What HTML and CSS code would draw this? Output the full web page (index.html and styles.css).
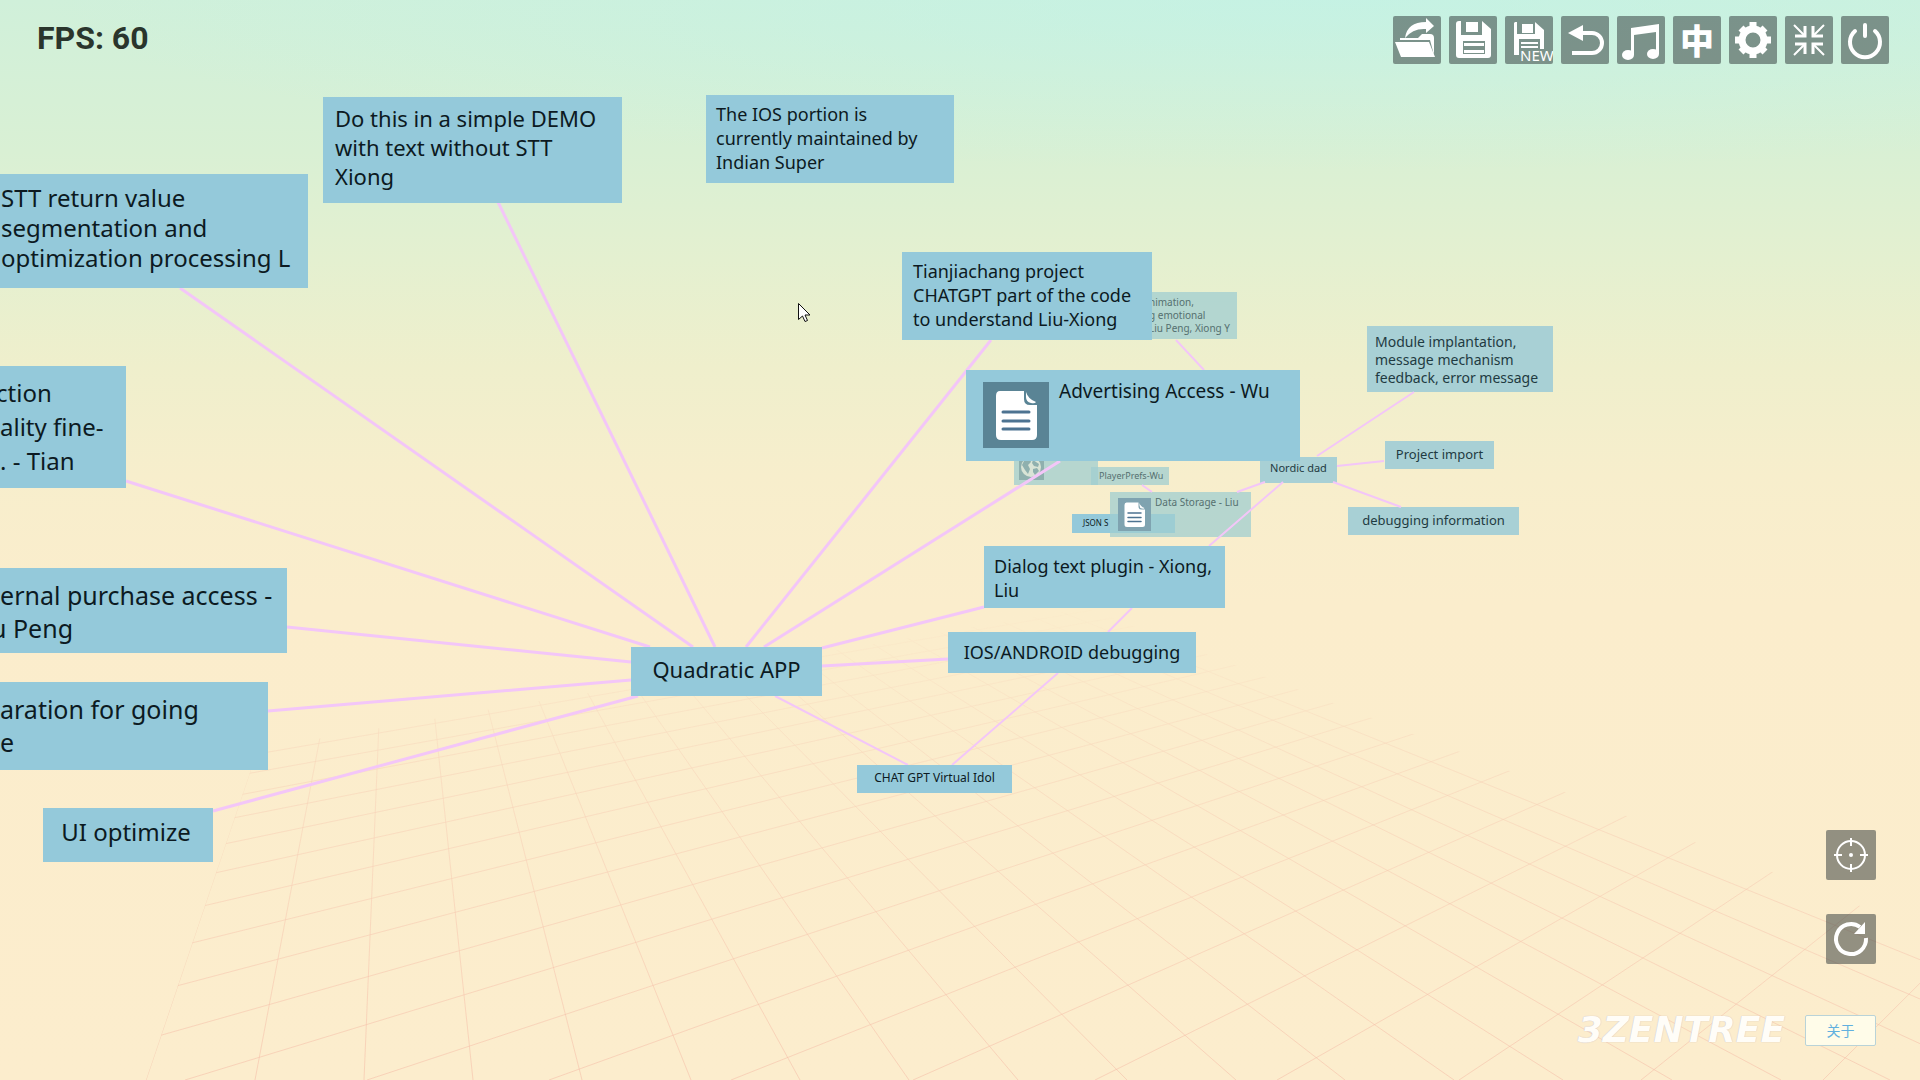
FILE: index.html
```html
<!DOCTYPE html>
<html lang="en">
<head>
<meta charset="utf-8">
<title>3ZENTREE</title>
<link rel="stylesheet" href="styles.css">
</head>
<body>
<svg class="defs" width="0" height="0" aria-hidden="true">
  <symbol id="doc" viewBox="0 0 66 66">
    <path fill="#fff" d="M17 9h24v8q0 6 6 6h7v30q0 5-5 5H18q-5 0-5-5V14q0-5 4-5z"/>
    <path fill="#fff" d="M43 10q2 7 10 10q-1 2-5 1q-5-1-5-6z"/>
    <path stroke="#4d7391" stroke-width="3" stroke-linecap="round" d="M20 30h26M20 39h26M20 47h26"/>
  </symbol>
</svg>

<main class="stage">
  <svg class="layer floor" aria-hidden="true">
    <defs>
      <linearGradient id="fade" x1="0" y1="0" x2="0" y2="1">
        <stop offset="0" stop-color="#fff" stop-opacity="0"/>
        <stop offset=".35" stop-color="#fff" stop-opacity=".5"/>
        <stop offset="1" stop-color="#fff"/>
      </linearGradient>
      <mask id="floor-fade" maskUnits="userSpaceOnUse" x="0" y="600" width="1920" height="480">
        <rect x="0" y="600" width="1920" height="480" fill="url(#fade)"/>
      </mask>
      <clipPath id="floor-edge"><path d="M258 749L1086 608L1920 929V1080H146z"/></clipPath>
    </defs>
    <g mask="url(#floor-fade)"><g clip-path="url(#floor-edge)"><path id="floor-grid" class="grid"/></g></g>
  </svg>

  <article class="node far s10 n-emotion">nimation,<br>g emotional<br>Liu Peng, Xiong Y</article>
  <article class="node far n-globe">
    <svg class="pic" viewBox="0 0 25 25" role="img" aria-label="Web page"><rect width="25" height="25" fill="#8fb0ae"/><circle cx="12" cy="12" r="10" fill="#d9e4d6"/><path fill="#8fb0ae" d="M5 6l6-2 1 3-3 3 2 4-2 5-3-4-3-5zM14 5l6 4-1 3-4-1-2-3zM14 14l4-1 2 3-4 4-2-3z"/></svg>
  </article>
  <article class="node s12 n-json">JSON S</article>
  <article class="node far s9 n-prefs">PlayerPrefs-Wu</article>
  <article class="node far s10 n-data"><svg class="pic" role="img" aria-label="Document"><use href="#doc"/></svg><span>Data Storage - Liu</span></article>
  <article class="node mid s11 n-nordic">Nordic dad</article>
  <article class="node mid s14 n-module">Module implantation,<br>message mechanism<br>feedback, error message</article>
  <article class="node mid s13 n-import">Project import</article>
  <article class="node mid s13 n-info">debugging information</article>

  <svg class="layer links" aria-hidden="true">
    <path class="near" d="M498 202L715 647M180 288L693 647M126 481L650 647M287 627L631 662M268 711L631 680M213 811L638 696M991 340L746 647M1060 461L764 647M984 607L822 648M948 659L822 666"/>
    <path class="thin" d="M775 696L908 765M952 765L1058 673M1108 632L1132 608M1209 546L1283 482M1317 456L1414 392M1337 466L1384 461M1333 482L1401 507M1265 482L1237 492M1176 340L1204 370M1142 485L1152 492"/>
  </svg>

  <article class="node s22 n-demo">Do this in a simple DEMO<br>with text without STT<br>Xiong</article>
  <article class="node s24 n-stt">STT return value<br>segmentation and<br>optimization processing L</article>
  <article class="node s24 n-function">ction<br>ality fine-<br>. - Tian</article>
  <article class="node s25 n-purchase">ternal purchase access -<br>u Peng</article>
  <article class="node s25 n-online">aration for going<br>e</article>
  <article class="node s24 n-ui">UI optimize</article>
  <article class="node s18 n-ios">The IOS portion is<br>currently maintained by<br>Indian Super</article>
  <article class="node s18 n-tian">Tianjiachang project<br>CHATGPT part of the code<br>to understand Liu-Xiong</article>
  <article class="node s19 n-ads"><svg class="pic" role="img" aria-label="Document"><use href="#doc"/></svg><span>Advertising Access - Wu</span></article>
  <article class="node s18 n-dialog">Dialog text plugin - Xiong,<br>Liu</article>
  <article class="node s18 n-debug">IOS/ANDROID debugging</article>
  <article class="node s22 n-quad">Quadratic APP</article>
  <article class="node s12 n-chat">CHAT GPT Virtual Idol</article>

  <svg class="cursor" viewBox="0 0 13 20" aria-hidden="true"><path fill="#fff" stroke="#111" d="M.5.5v16l4-3.500 2.500 5.500 2.500-1-2.500-5.500h5z"/></svg>
</main>

<header class="top">
  <p class="fps">FPS: 60</p>
  <nav class="tools">
    <button type="button" aria-label="Open"><svg viewBox="0 0 48 48"><path d="M2 26h34l6 15H8z"/><path d="M7 24v-2h18l4-4h8q4 0 4 4v17l-4-15z"/><path d="M12 22Q14 6 33 6V2l8 8-8 7v-4Q20 12 12 22z"/></svg></button>
    <button type="button" aria-label="Save"><svg viewBox="0 0 48 48"><path fill-rule="evenodd" d="M10 5h2v14h21V5l9 8v26q0 3-3 3H10q-3 0-3-3V8q0-3 3-3zM14 25v13h22V25z"/><path d="M17 6h12v10H17zM15 27h20v3H15zM15 34h20v3H15z"/></svg></button>
    <button type="button" aria-label="Save as new"><svg viewBox="0 0 48 48"><path d="M10 6h2v12h18V6l9 8v19h-4V23H14v16H9V7z"/><path d="M17 8h11v9H17zM16 26h17v2H16zM16 30h17v2H16z"/><text x="15" y="45" font-size="15">NEW</text></svg></button>
    <button type="button" aria-label="Undo"><svg viewBox="0 0 48 48"><path d="M7 17L22 9v16z"/><path class="line" stroke-width="4" d="M20 17h11a10 10 0 0 1 0 20H11"/></svg></button>
    <button type="button" aria-label="Music"><svg viewBox="0 0 48 48"><path d="M14 12l28-4v30h-3V16l-22 3v20h-3z"/><ellipse cx="11" cy="39" rx="6" ry="5"/><ellipse cx="36" cy="38" rx="6" ry="5"/></svg></button>
    <button type="button" aria-label="Language" class="lang">中</button>
    <button type="button" aria-label="Settings"><svg viewBox="0 0 48 48"><circle class="line" cx="24" cy="24" r="11" stroke-width="7"/><path class="line" stroke-width="7" d="M24 6v5M24 37v5M6 24h5M37 24h5M12 12l3 3M33 33l3 3M36 12l-3 3M15 33l-3 3"/></svg></button>
    <button type="button" aria-label="Exit full screen"><svg viewBox="0 0 48 48"><path class="line" stroke-width="2" d="M9 9l10 10M39 9L29 19M9 39l10-10M39 39L29 29"/><path class="line" stroke-width="3" d="M20 10v10H10M28 10v10h10M20 38V28H10M28 38V28h10"/></svg></button>
    <button type="button" aria-label="Quit"><svg viewBox="0 0 48 48"><path class="line" stroke-width="4" stroke-linecap="round" d="M24 9v11"/><path class="line" stroke-width="4" stroke-linecap="round" d="M14 15a15 15 0 1 0 20 0"/></svg></button>
  </nav>
</header>

<footer class="bottom">
  <div class="side">
    <button type="button" aria-label="Centre view"><svg viewBox="0 0 50 50"><circle class="line" cx="25" cy="25" r="14" stroke-width="2"/><path class="line" stroke-width="2" d="M25 8v8M25 34v8M8 25h8M34 25h8"/><circle cx="25" cy="25" r="2"/></svg></button>
    <button type="button" aria-label="Reset view"><svg viewBox="0 0 50 50"><path class="line" stroke-width="4" d="M40 24A15 15 0 1 1 34 13"/><path d="M39 8v12H28z"/></svg></button>
  </div>
  <div class="brand">
    <strong class="logo">3ZENTREE</strong>
    <button type="button" class="about" lang="zh">关于</button>
  </div>
</footer>
<script src="grid.js"></script>
</body>
</html>
```
FILE: styles.css
```css
* { box-sizing: border-box; }

body {
  margin: 0;
  min-height: 100vh;
  position: relative;
  display: flex;
  flex-direction: column;
  justify-content: space-between;
  overflow: hidden;
  font-family: "Noto Sans", "Noto Sans CJK SC", sans-serif;
  color: #0c1a22;
  background:
    radial-gradient(ellipse 1300px 170px at 70% 0, rgba(190, 243, 234, .6), rgba(190, 243, 234, 0)),
    linear-gradient(#d0f0da 0, #d9f0d4 14%, #e4f0d0 24%, #efefcc 34%, #f7eecc 44%, #fbedcc 56%, #fcedcd 100%);
}

.defs { position: absolute; }

/* Mind map canvas */
.stage { position: absolute; inset: 0; overflow: hidden; }
.layer { position: absolute; inset: 0; width: 100%; height: 100%; }
.layer path { fill: none; }
.links path { stroke: #f3c6f8; }
.links .near { stroke-width: 3; }
.links .thin { stroke-width: 2; }
.layer .grid { stroke: #f5b8a4; stroke-width: 1; opacity: .5; }

.node {
  position: absolute;
  background: #94c9da;
  white-space: nowrap;
}
.node.mid { background: #a8d0d5; color: #1f3b42; }
.node.far { background: rgba(160, 205, 208, .75); color: #55706f; }

.s9 { font-size: 9px; line-height: 12px; }
.s10 { font-size: 10px; line-height: 13px; }
.s11 { font-size: 11px; line-height: 16px; }
.s12 { font-size: 12px; line-height: 18px; }
.s13 { font-size: 13px; line-height: 18px; }
.s14 { font-size: 14px; line-height: 18px; }
.s18 { font-size: 18px; line-height: 24px; }
.s19 { font-size: 19px; line-height: 24px; }
.s22 { font-size: 22px; line-height: 29px; }
.s24 { font-size: 24px; line-height: 34px; }
.s25 { font-size: 25px; line-height: 33px; }

.n-demo { left: 323px; top: 97px; width: 299px; padding: 7px 12px 12px; }
.n-stt { left: 0; top: 174px; width: 308px; padding: 9px 1px 15px; line-height: 30px; }
.n-function { left: 0; top: 366px; width: 126px; padding: 10px 0; text-indent: -4px; }
.n-purchase { left: -9px; top: 568px; width: 296px; padding: 11px 0 8px; }
.n-online { left: 0; top: 682px; width: 268px; padding: 11px 0; }
.n-ui { left: 43px; top: 808px; width: 170px; padding: 7px 4px 13px 0; text-align: center; }
.n-ios { left: 706px; top: 95px; width: 248px; padding: 7px 10px 9px; }
.n-tian { left: 902px; top: 252px; width: 250px; padding: 7px 11px 9px; }
.n-emotion { left: 1149px; top: 292px; width: 88px; padding: 4px 0; }
.n-ads { left: 966px; top: 370px; width: 334px; padding: 12px 17px 13px; display: flex; gap: 10px; }
.n-ads span { margin-top: -3px; }
.n-ads .pic { width: 66px; height: 66px; background: #5a8495; }
.n-globe { left: 1014px; top: 450px; width: 84px; padding: 5px; }
.n-globe .pic { display: block; width: 25px; height: 25px; }
.n-json { left: 1072px; top: 514px; width: 103px; padding: 0 11px 1px; font-size: 8px; }
.n-prefs { left: 1091px; top: 467px; width: 78px; padding: 3px 8px; }
.n-data { left: 1110px; top: 492px; width: 141px; padding: 6px 8px; display: flex; gap: 4px; }
.n-data span { margin-top: -2px; }
.n-data .pic { width: 33px; height: 33px; background: #7fa3b0; }
.n-nordic { left: 1260px; top: 457px; width: 77px; padding: 3px 0 7px; text-align: center; }
.n-module { left: 1367px; top: 326px; width: 186px; padding: 7px 8px 5px; }
.n-import { left: 1385px; top: 441px; width: 109px; padding: 4px 0 6px; text-align: center; }
.n-info { left: 1348px; top: 507px; width: 171px; padding: 4px 0 6px; text-align: center; }
.n-dialog { left: 984px; top: 546px; width: 241px; padding: 8px 10px 6px; }
.n-debug { left: 948px; top: 632px; width: 248px; padding: 8px 0 9px; text-align: center; }
.n-quad { left: 631px; top: 647px; width: 191px; padding: 8px 0 12px; text-align: center; }
.n-chat { left: 857px; top: 765px; width: 155px; padding: 4px 0 6px; text-align: center; }

.cursor { position: absolute; left: 798px; top: 303px; width: 13px; height: 20px; }

/* Controls */
button {
  width: 48px;
  height: 48px;
  padding: 0;
  border: 0;
  border-radius: 2px;
  background: rgba(50, 60, 60, .52);
  color: #fff;
  font-family: inherit;
}
button svg { display: block; width: 100%; height: 100%; fill: #fff; }
button .line { fill: none; stroke: #fff; }

.top {
  position: relative;
  display: flex;
  justify-content: space-between;
  align-items: flex-start;
  padding: 16px 31px 0 37px;
}
.fps {
  margin: 0;
  font: bold 32px/44px Roboto, sans-serif;
  color: #2a352c;
}
.tools { display: flex; gap: 8px; }
.lang { font: 900 34px/44px "Noto Sans CJK SC", sans-serif; }

.bottom {
  position: relative;
  display: flex;
  flex-direction: column;
  align-items: flex-end;
  gap: 50px;
  padding: 0 44px 34px 0;
}
.side { display: flex; flex-direction: column; gap: 34px; }
.side button { width: 50px; height: 50px; }
.brand { display: flex; align-items: center; gap: 20px; }
.logo {
  font: italic bold 36px/32px "DejaVu Sans", sans-serif;
  color: #fffdf8;
  text-shadow: 0 0 1px #b9aebb;
}
.about {
  width: 71px;
  height: 31px;
  border: 1px solid #b9d3d8;
  background: #fffce9;
  color: #62b0df;
  font-size: 14px;
}
```
FILE: grid.js
```js
// Floor grid: two families of lines, each running to its own vanishing point.
let d = '';
for (let k = 0; k <= 20; k++) d += `M395 342L${146 + 109 * k} 1080`;
for (let k = -40; k <= 12; k++) d += `M2544 360L${3 + 182 * k} 1080`;
document.getElementById('floor-grid').setAttribute('d', d);
```
